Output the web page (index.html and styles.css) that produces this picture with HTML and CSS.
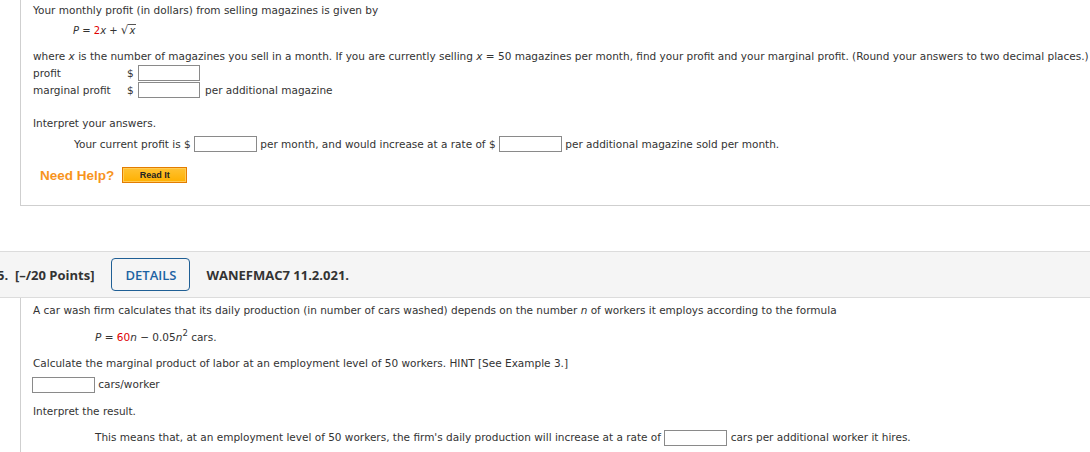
FILE: index.html
```html
<!DOCTYPE html>
<html>
<head>
<meta charset="utf-8">
<link rel="stylesheet" href="styles.css">
</head>
<body>
<div class="q q-first">
  <p class="line l-intro">Your monthly profit (in dollars) from selling magazines is given by</p>
  <p class="line formula f1"><i>P</i> = <span class="red">2</span><i>x</i> + <span class="sqrt"><span class="rad">√</span><span class="under"><i>x</i></span></span></p>
  <p class="line l-where">where <i>x</i> is the number of magazines you sell in a month. If you are currently selling <i>x</i> = 50 magazines per month, find your profit and your marginal profit. (Round your answers to two decimal places.)</p>
  <div class="answers">
    <div class="arow"><span class="alabel">profit</span><span class="dollar">$</span><span class="inp"></span></div>
    <div class="arow"><span class="alabel">marginal profit</span><span class="dollar">$</span><span class="inp"></span><span class="after">per additional magazine</span></div>
  </div>
  <p class="line l-interp">Interpret your answers.</p>
  <p class="line l-current">Your current profit is $ <span class="inp wide"></span> per month, and would increase at a rate of $ <span class="inp wide"></span> per additional magazine sold per month.</p>
  <div class="help">
    <span class="need">Need Help?</span>
    <span class="readit">Read It</span>
  </div>
</div>

<div class="qhead">
  <span class="points">5.&nbsp; [–/20 Points]</span>
  <span class="details">DETAILS</span>
  <span class="code">WANEFMAC7 11.2.021.</span>
</div>

<div class="q q-second">
  <p class="line l-car">A car wash firm calculates that its daily production (in number of cars washed) depends on the number <i>n</i> of workers it employs according to the formula</p>
  <p class="line formula f2"><i>P</i> = <span class="red">60</span><i>n</i> − 0.05<i>n</i><sup>2</sup> cars.</p>
  <p class="line l-calc">Calculate the marginal product of labor at an employment level of 50 workers. HINT [See Example 3.]</p>
  <p class="line l-unit"><span class="inp"></span> cars/worker</p>
  <p class="line l-interp2">Interpret the result.</p>
  <p class="line l-means">This means that, at an employment level of 50 workers, the firm's daily production will increase at a rate of <span class="inp"></span> cars per additional worker it hires.</p>
</div>
</body>
</html>
```

FILE: styles.css
```css
html, body {
  margin: 0;
  padding: 0;
  background: #fff;
  overflow: hidden;
}
body {
  width: 1090px;
  height: 452px;
  font-family: Verdana, "DejaVu Sans", sans-serif;
  font-size: 10.5px;
  color: #333;
}
.line {
  margin: 0;
  line-height: 16px;
  white-space: nowrap;
}
.q {
  margin-left: 20px;
  border-left: 1px solid #cfcfcf;
  padding-left: 12px;
}
.q-first {
  border-bottom: 1px solid #cfcfcf;
  padding-top: 2px;
  box-sizing: border-box;
  height: 206px;
}
.red { color: #e00000; }
.formula { padding-left: 40px; }
.f1 { margin-top: 5px; font-size: 10px; }
.sqrt { display: inline-flex; align-items: flex-end; }
.rad { font-size: 12px; line-height: 12px; }
.under { border-top: 1px solid #555; line-height: 11px; padding: 0 1px; }
.l-where { margin-top: 9px; }
.arow {
  display: flex;
  align-items: center;
  height: 17px;
  line-height: 16px;
}
.alabel { width: 94px; }
.dollar { width: 10px; }
.inp {
  display: inline-block;
  width: 60px;
  height: 14px;
  border: 1px solid #8a8a8a;
  vertical-align: middle;
  background: #fff;
}
.arow .inp { margin-left: 1px; }
.after { margin-left: 5px; }
.l-interp { margin-top: 17px; }
.l-current { margin-top: 5px; padding-left: 41px; }
.l-current .inp { width: 61px; margin-top: -2px; }
.help {
  display: flex;
  align-items: center;
  margin-top: 15px;
  margin-left: 7px;
}
.need {
  font-family: "Liberation Sans", Arial, sans-serif;
  font-weight: bold;
  font-size: 13.5px;
  color: #f7941d;
}
.readit {
  margin-left: 8px;
  width: 63px;
  height: 14px;
  border: 1px solid #e37c00;
  background: linear-gradient(#ffc233, #ffb000);
  box-shadow: inset 0 0 0 1px #ffcc55;
  font-family: "Liberation Sans", Arial, sans-serif;
  font-weight: bold;
  font-size: 9px;
  color: #222;
  text-align: center;
  line-height: 14px;
}
.qhead {
  margin-top: 45px;
  height: 45px;
  background: #f5f5f5;
  border-top: 1px solid #dcdcdc;
  border-bottom: 1px solid #dcdcdc;
  display: flex;
  align-items: center;
  font-family: "Open Sans", "Noto Sans", sans-serif;
  font-size: 13px;
  font-weight: bold;
  color: #333;
  margin-left: -3px;
}
.details {
  margin-left: 17px;
  border: 1px solid #1f5f95;
  border-radius: 4px;
  color: #1d63a3;
  font-weight: 600;
  display: flex;
  align-items: center;
  justify-content: center;
  box-sizing: border-box;
  width: 79px;
  height: 33px;
}
.code { margin-left: 16px; }
.q-second { padding-top: 4px; height: 160px; }
.f2 { margin-top: 11px; padding-left: 62px; }
.f2 sup { font-size: 8.5px; line-height: 0; vertical-align: 5px; }
.l-calc { margin-top: 10px; }
.l-unit { margin-top: 5px; margin-left: -1px; }
.l-unit .inp { width: 61px; }
.l-interp2 { margin-top: 10px; }
.l-means { margin-top: 10px; padding-left: 62px; }
.l-means .inp { width: 61px; }
```
